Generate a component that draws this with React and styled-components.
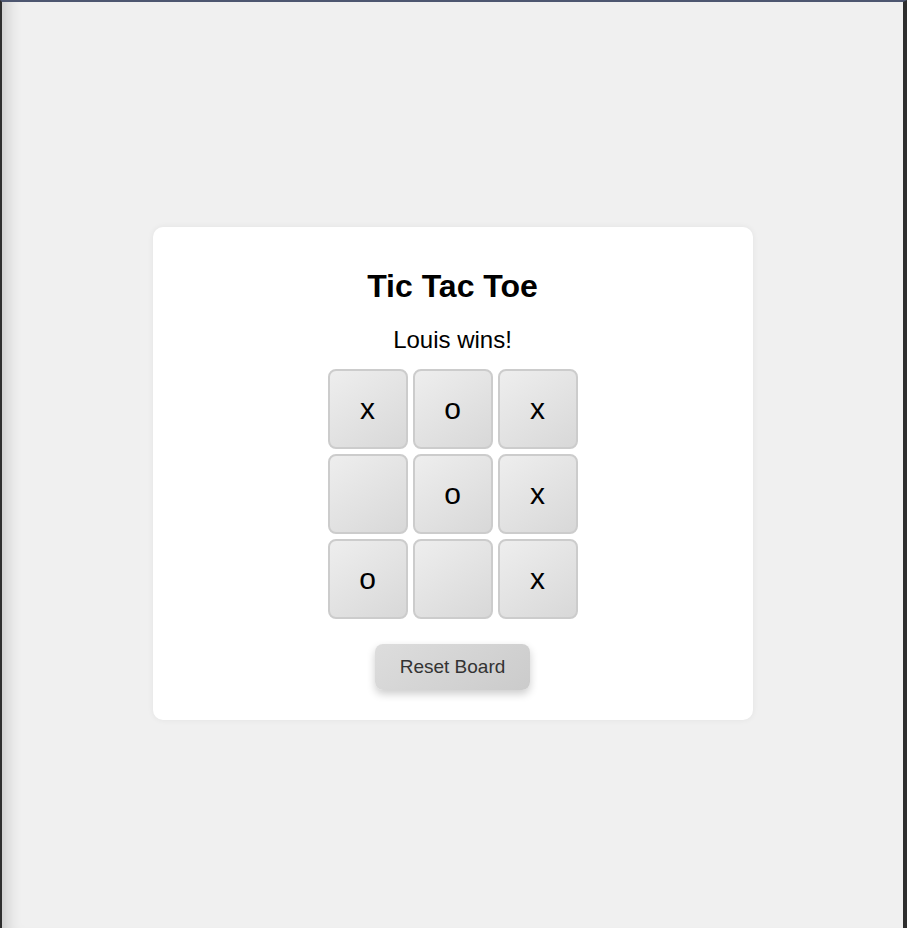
import React, { useState } from 'react';
import styled, { createGlobalStyle } from 'styled-components';

const GlobalStyle = createGlobalStyle`
  html, body {
    margin: 0;
    padding: 0;
    background: #f0f0f0;
    font-family: "Liberation Sans", Arial, sans-serif;
  }
  * { box-sizing: border-box; }
`;

// window frame seen around the page
const Frame = styled.div`
  min-height: 100vh;
  border-top: 2px solid #4d5670;
  border-left: 2px solid #2e2e2e;
  border-right: 4px solid #2e2e2e;
  box-shadow: inset 18px 0 16px -14px rgba(0, 0, 0, 0.18);
  display: flex;
  align-items: center;
  justify-content: center;
  padding-top: 17px;
`;

const Card = styled.div`
  width: 600px;
  background: #ffffff;
  border-radius: 10px;
  box-shadow: 0 0 6px rgba(0, 0, 0, 0.06);
  padding: 42px 0 30px;
  display: flex;
  flex-direction: column;
  align-items: center;
`;

const Title = styled.h1`
  margin: 0 0 23px;
  font-size: 32px;
  line-height: 34px;
  font-weight: 700;
  color: #000;
`;

const Status = styled.div`
  margin: 0 0 15px;
  font-size: 24px;
  line-height: 28px;
  color: #000;
`;

const Board = styled.div`
  display: grid;
  grid-template-columns: repeat(3, 80px);
  grid-auto-rows: 80px;
  gap: 5px;
  margin-bottom: 25px;
`;

const Cell = styled.button`
  width: 80px;
  height: 80px;
  border: 2px solid #cccccc;
  border-radius: 8px;
  background: linear-gradient(145deg, #eeeeee 0%, #d8d8d8 100%);
  font-family: "Liberation Sans", Arial, sans-serif;
  font-size: 30px;
  color: #000;
  padding: 0;
  cursor: pointer;
  display: flex;
  align-items: center;
  justify-content: center;
`;

const ResetButton = styled.button`
  height: 46px;
  padding: 0 25px;
  border: none;
  border-radius: 8px;
  background: linear-gradient(145deg, #dddddd 0%, #cbcbcb 100%);
  box-shadow: 0 4px 8px rgba(0, 0, 0, 0.2);
  font-family: "Liberation Sans", Arial, sans-serif;
  font-size: 19px;
  color: #333333;
  cursor: pointer;
`;

const initial = ['x', 'o', 'x', '', 'o', 'x', 'o', '', 'x'];

export default function App() {
  const [cells, setCells] = useState(initial);

  return (
    <>
      <GlobalStyle />
      <Frame>
        <Card>
          <Title>Tic Tac Toe</Title>
          <Status>Louis wins!</Status>
          <Board>
            {cells.map((v, i) => (
              <Cell key={i}>{v}</Cell>
            ))}
          </Board>
          <ResetButton onClick={() => setCells(Array(9).fill(''))}>Reset Board</ResetButton>
        </Card>
      </Frame>
    </>
  );
}
